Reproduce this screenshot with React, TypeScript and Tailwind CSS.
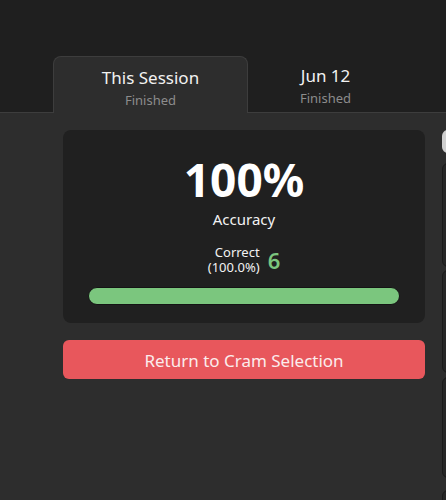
import React from 'react';

const font = { fontFamily: '"Noto Sans", "Open Sans", sans-serif' };

function Tab({ title, active }: { title: string; active?: boolean }) {
  return (
    <div
      className={
        active
          ? 'relative -mb-px flex h-[57px] w-[195px] flex-col items-center rounded-t-lg border border-b-0 border-[#3d3d3d] bg-[#2d2d2d] pt-[8px]'
          : 'flex h-[56px] w-[155px] flex-col items-center pt-[7px]'
      }
    >
      <span className="text-[17px] leading-[26px] text-[#f2f2f2]">{title}</span>
      <span className="text-[13px] leading-[18px] text-[#8c8c8c]">Finished</span>
    </div>
  );
}

export default function App() {
  return (
    <div style={font} className="flex h-[500px] w-[446px] flex-col overflow-hidden bg-[#2d2d2d]">
      <header className="flex h-[113px] shrink-0 items-end border-b border-[#3d3d3d] bg-[#1f1f1f] pl-[53px]">
        <Tab title="This Session" active />
        <Tab title="Jun 12" />
      </header>

      <div className="flex shrink-0 gap-[17px] pl-[63px] pt-[17px]">
        <div className="flex w-[362px] shrink-0 flex-col gap-[17px]">
          <section className="flex h-[193px] flex-col items-center rounded-lg bg-[#202020] px-[25px] pt-[21px]">
            <div className="text-[46px] font-bold leading-[56px] text-white">100%</div>
            <div className="mt-[2px] text-[15px] leading-[20px] text-[#f2f2f2]">Accuracy</div>
            <div className="mt-[16px] flex items-center gap-[8px]">
              <div className="text-right text-[13px] leading-[15px] text-[#f2f2f2]">
                Correct
                <br />
                (100.0%)
              </div>
              <span className="text-[22px] font-semibold leading-none text-[#7bc67e]">6</span>
            </div>
            <div className="mt-[12px] h-[18px] w-full rounded-full border border-[#141414] bg-[#7bc67e]" />
          </section>

          <button className="h-[39px] rounded-md bg-[#e8575c] pt-[2px] text-[17px] text-[#fbecec]">
            Return to Cram Selection
          </button>
        </div>

        <div className="flex w-[40px] shrink-0 flex-col">
          <div className="h-[23px] rounded-md bg-[#cfcfcf]" />
          <div className="mt-[10px] h-[104px] rounded-md border border-[#1a1a1a] bg-[#262626]" />
          <div className="mt-[3px] h-[103px] rounded-md border border-[#1a1a1a] bg-[#262626]" />
          <div className="mt-[4px] h-[101px] rounded-md border border-[#1a1a1a] bg-[#262626]" />
          <div className="mt-[12px] h-[40px] rounded-md border border-[#1a1a1a] bg-[#262626]" />
        </div>
      </div>
    </div>
  );
}
